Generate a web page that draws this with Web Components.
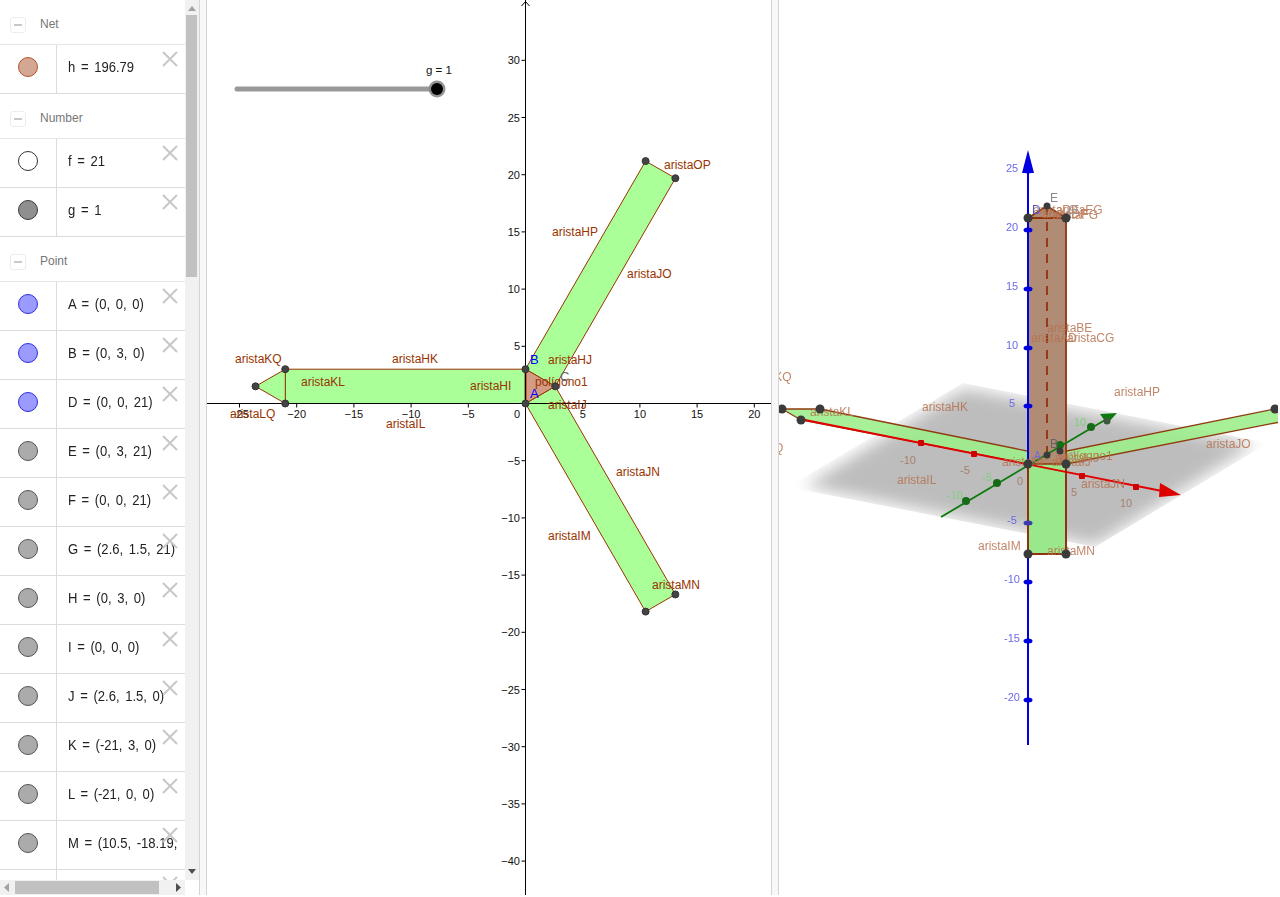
<!DOCTYPE html>
<html><head><meta charset="utf-8"><title>Net</title>
<style>html,body{margin:0;background:#fff;overflow:hidden}body{font-family:"Liberation Sans",sans-serif}</style>
</head><body>
<gg-app>
  <algebra-panel slot="algebra">
    <algebra-group label="Net"><algebra-row kind="net">h = 196.79</algebra-row></algebra-group>
    <algebra-group label="Number">
      <algebra-row kind="white">f = 21</algebra-row>
      <algebra-row kind="slider">g = 1</algebra-row>
    </algebra-group>
    <algebra-group label="Point">
      <algebra-row kind="free">A = (0, 0, 0)</algebra-row>
      <algebra-row kind="free">B = (0, 3, 0)</algebra-row>
      <algebra-row kind="free">D = (0, 0, 21)</algebra-row>
      <algebra-row kind="dep">E = (0, 3, 21)</algebra-row>
      <algebra-row kind="dep">F = (0, 0, 21)</algebra-row>
      <algebra-row kind="dep">G = (2.6, 1.5, 21)</algebra-row>
      <algebra-row kind="dep">H = (0, 3, 0)</algebra-row>
      <algebra-row kind="dep">I = (0, 0, 0)</algebra-row>
      <algebra-row kind="dep">J = (2.6, 1.5, 0)</algebra-row>
      <algebra-row kind="dep">K = (-21, 3, 0)</algebra-row>
      <algebra-row kind="dep">L = (-21, 0, 0)</algebra-row>
      <algebra-row kind="dep">M = (10.5, -18.19,</algebra-row>
      <algebra-row kind="dep"></algebra-row>
    </algebra-group>
  </algebra-panel>
  <view-splitter slot="s1"></view-splitter>
  <graphics-2d slot="g2"></graphics-2d>
  <view-splitter slot="s2"></view-splitter>
  <graphics-3d slot="g3"></graphics-3d>
</gg-app>
<script>
const sh=(el,html)=>{el.attachShadow({mode:'open'}).innerHTML=html;};
const T=(x,y,s,a='')=>`<text x="${x}" y="${y}" ${a}>${s}</text>`;

customElements.define('gg-app',class extends HTMLElement{constructor(){super();sh(this,`<style>
:host{display:flex;height:895px;width:1278px}
</style><slot name="algebra"></slot><slot name="s1"></slot><slot name="g2"></slot><slot name="s2"></slot><slot name="g3"></slot>`);}});

customElements.define('view-splitter',class extends HTMLElement{constructor(){super();sh(this,`<style>
:host{display:block;width:8px;box-sizing:border-box;height:895px;background:#f8f8f8;border-left:1px solid #d4d4d4;border-right:1px solid #d4d4d4}
</style>`);}});

customElements.define('algebra-panel',class extends HTMLElement{constructor(){super();sh(this,`<style>
:host{display:grid;grid-template:880px 15px/185px 14px;width:199px;height:895px;overflow:hidden}
.list{overflow:hidden;min-width:0;background:#fff}
.v{background:#f1f1f1;position:relative}
.v .thumb{position:absolute;left:1px;right:2px;top:15px;height:262px;background:#c1c1c1}
.h{background:#f1f1f1;position:relative}
.h .thumb{position:absolute;top:1px;left:15px;width:144px;background:#c1c1c1;height:13px}
svg{display:block;position:absolute}
</style>
<div class="list"><slot></slot></div>
<div class="v"><svg style="left:3px;top:5px" width="8" height="6"><path d="M4 1 8 6H0z" fill="#a3a3a3"/></svg><div class="thumb"></div><svg style="left:3px;top:869px" width="8" height="6"><path d="M0 0H8L4 5z" fill="#505050"/></svg></div>
<div class="h"><svg style="left:4px;top:3px" width="6" height="9"><path d="M0 4.5 5 0V9z" fill="#a3a3a3"/></svg><div class="thumb"></div><svg style="left:175px;top:3px" width="6" height="9"><path d="M1 0 6 4.5 1 9z" fill="#505050"/></svg></div>
<div></div>`);}});

customElements.define('algebra-group',class extends HTMLElement{constructor(){super();sh(this,`<style>
:host{display:block}
.head{height:38px;padding-top:6px;border-bottom:1px solid #e6e6e6;display:flex;align-items:center;gap:14px;padding-left:10px}
.box{width:14px;height:14px;border:1px solid #ececec;border-radius:3px;display:flex;align-items:center;justify-content:center}
.box i{display:block;width:8px;height:2px;background:#c8c8c8}
.label{font:12px "Liberation Sans",sans-serif;color:#777;margin-top:-3px}
</style><div class="head"><span class="box"><i></i></span><span class="label"></span></div><slot></slot>`);
this.shadowRoot.querySelector('.label').textContent=this.getAttribute('label');}});

const marbles={net:['#d4a793','#b0552d'],white:['#fff','#333'],slider:['#8f8f8f','#3a3a3a'],free:['#9a9aff','#2f2fe0'],dep:['#ababab','#555']};
customElements.define('algebra-row',class extends HTMLElement{constructor(){super();
const [f,s]=marbles[this.getAttribute('kind')];
sh(this,`<style>
:host{display:flex;height:48px;border-bottom:1px solid #dcdcdc;position:relative}
.m{width:56px;flex:none;border-right:1px solid #dcdcdc;display:flex;align-items:center;justify-content:center;padding-bottom:4px;height:44px}
.m i{display:block;width:18px;height:18px;border-radius:50%;background:${f};border:1px solid ${s}}
.v{flex:1;min-width:0;overflow:hidden;white-space:nowrap;padding-left:11px;padding-bottom:6px;height:42px;display:flex;align-items:center;font:15px "Liberation Sans",sans-serif;color:#222;word-spacing:2.3px}
.v span{display:inline-block;flex:none;transform:scaleX(.87);transform-origin:left center}
svg{position:absolute;right:7px;top:6px}
</style><div class="m"><i></i></div><div class="v"><span><slot></slot></span></div>
<svg width="16" height="16"><path d="M1 1 15 15M15 1 1 15" stroke="#c8c8c8" stroke-width="2" fill="none"/></svg>`);}});

customElements.define('graphics-2d',class extends HTMLElement{constructor(){super();
const X=u=>525.5+u*11.44,Y=v=>403.5-v*11.44;
const pts={A:[0,0],B:[0,3],C:[2.6,1.5],K:[-21,3],L:[-21,0],Q:[-23.6,1.5],M:[10.5,-18.19],N:[13.1,-16.69],O:[13.1,19.69],P:[10.5,21.19]};
const P=n=>`${X(pts[n][0]).toFixed(1)},${Y(pts[n][1]).toFixed(1)}`;
const poly=(ns,f)=>`<polygon points="${ns.map(P).join(' ')}" fill="${f}" stroke="#993300" stroke-width="1"/>`;
let ax='';
for(const u of [-25,-20,-15,-10,-5,5,10,15,20]){ax+=`<path d="M${X(u)} 403.500v4"/>`;}
for(let v=-40;v<=30;v+=5){if(v)ax+=`<path d="M525.5 ${Y(v)}h-4"/>`;}
let tx='';
for(const u of [-25,-20,-15,-10,-5,5,10,15,20]){tx+=T(X(u),418,(u<0?'−':'')+Math.abs(u),'text-anchor="middle"');}
tx+=T(517,418,'0','text-anchor="middle"');
for(let v=-40;v<=30;v+=5){if(v)tx+=T(520,Y(v)+4,(v<0?'−':'')+Math.abs(v),'text-anchor="end"');}
const labels=[['aristaOP',664,169],['aristaHP',552,236],['aristaJO',627,278],['aristaHK',392,363],['aristaKQ',235,363],['aristaKL',301,386],['aristaHI',470,390],['aristaHJ',548,364],['polígono1',535,386],['aristaIJ',548,409],['aristaLQ',230,418],['aristaIL',386,428],['aristaJN',616,476],['aristaIM',548,540],['aristaMN',652,589]];
sh(this,`<style>
:host{display:block;width:564px;height:895px;background:#fff}
svg{display:block;font-family:"Liberation Sans",sans-serif}
.t{font-size:11px;fill:#111}.l{font-size:12px;fill:#993300}
</style>
<svg width="564" height="895" viewBox="207 0 564 895">
${poly(['B','P','O','C'],'#aaff99')}${poly(['A','M','N','C'],'#aaff99')}${poly(['B','K','L','A'],'#aaff99')}${poly(['K','Q','L'],'#aaff99')}
${poly(['A','B','C'],'#d49c84')}
<path d="M${X(0)} ${Y(0)}V${Y(3)}" stroke="#993300" stroke-width="2"/>
<g stroke="#000" stroke-width="1" fill="none"><path d="M207 403.500H771M525.5 0V895M521.5 6 525.5 1.5 529.5 6"/>${ax}</g>
<g class="t">${tx}</g>
<g class="l">${labels.map(l=>T(l[1],l[2],l[0])).join('')}</g>
${T(530,364,'B','font-size="13" fill="#0000ff"')}${T(530,398,'A','font-size="13" fill="#0000ff"')}${T(560,381,'C','font-size="13" fill="#666"')}
${Object.keys(pts).map(n=>`<circle cx="${X(pts[n][0])}" cy="${Y(pts[n][1])}" r="3.5" fill="#444" stroke="#333"/>`).join('')}
<path d="M237 89H437" stroke="#999" stroke-width="5" stroke-linecap="round"/>
<circle cx="437" cy="89" r="8.5" fill="#8a8a8a" opacity=".9"/><circle cx="437" cy="89" r="6" fill="#000"/>
${T(426,74,'g = 1','font-size="11.5" fill="#111"')}
</svg>`);}});

customElements.define('graphics-3d',class extends HTMLElement{constructor(){super();
const lab=[['aristaHP',1114,396],['aristaJO',1206,448],['aristaHK',922,411],['aristaKL',810,416],['aristaKQ',745,381],['aristaLQ',738,452],['aristaIL',897,484],['aristaIM',978,550],['aristaMN',1047,555],['aristaJN',1081,488],['aristaBE',1047,332],['aristaAD',1031,342],['aristaCG',1067,342],['aristaEG',1056,214],['aristaFG',1052,219],['aristaDE',1033,214],['aristaDF',1042,218],['aristaHJ',1055,462],['aristaIJ',1052,466],['polígono1',1060,460],['aristaHI',1002,466]];
const zt=[[25,171],[20,230],[15,289],[10,348],[5,406],[-5,523],[-10,582],[-15,641],[-20,700]];
const xt=[[921,443],[974,454],[1082,476],[1136,487]];
const yt=[[966,501],[997,483],[1060,445],[1091,427]];
sh(this,`<style>
:host{display:block;width:499px;height:895px;background:#fff}
svg{display:block;font-family:"Liberation Sans",sans-serif}
.l{font-size:12px;fill:#b5714f;opacity:.85}
</style>
<svg width="499" height="895" viewBox="779 0 499 895">
<defs>
<filter id="soft" x="-10%" y="-15%" width="120%" height="130%"><feGaussianBlur stdDeviation="8"/></filter>
<filter id="aa" x="-2%" y="-2%" width="104%" height="104%"><feGaussianBlur stdDeviation=".35"/></filter>
<clipPath id="plane"><polygon points="788,487 963,383 1268,443 1095,547"/></clipPath>
</defs>
<g clip-path="url(#plane)"><polygon points="805,486 964,388 1255,444 1095,545" fill="#bdbdbd" filter="url(#soft)"/></g>
<g filter="url(#aa)">
<g font-size="11">
${zt.map(([v,y])=>T(1012,y+1,(v<0?'-':'')+Math.abs(v),'fill="#6a6ae8" text-anchor="middle"')).join('')}
${T(908,464,'-10','fill="#a5806d" text-anchor="middle"')}${T(965,474,'-5','fill="#a5806d" text-anchor="middle"')}${T(1020,485,'0','fill="#a5806d" text-anchor="middle"')}${T(1074,496,'5','fill="#a5806d" text-anchor="middle"')}${T(1126,507,'10','fill="#a5806d" text-anchor="middle"')}
${T(955,499,'-10','fill="#7fd07f" text-anchor="middle"')}${T(987,481,'-5','fill="#7fd07f" text-anchor="middle"')}${T(1080,426,'10','fill="#7fd07f" text-anchor="middle"')}
</g>
<polygon points="782,409 820,409 1047,455 1028,464 801,420" fill="#9dee8c" fill-opacity=".9"/>
<polygon points="1047,455 1275,409 1290,406.500 1290,420 1066,464" fill="#9dee8c" fill-opacity=".9"/>
<path d="M782 409H820L1047 455M782 409 801 420 1028 464M1047 455 1275 409 1290 406.500M1066 464 1290 420" fill="none" stroke="#8f3a10" stroke-width="1.300"/>
<rect x="1028" y="464" width="38" height="90" fill="#9ae88c"/>
<path d="M1028 464V554H1066V464" fill="none" stroke="#8f3308" stroke-width="2"/>
<polygon points="1028,218 1047,206 1066,218 1066,464 1047,455 1028,464" fill="#b08c76"/>
<polygon points="1028,464 1047,455 1066,464" fill="#b08a6a"/>
<path d="M1028 218H1066L1047 206ZM1066 218V464" fill="none" stroke="#8f3308" stroke-width="1.800"/>
<path d="M1047 206V455" stroke="#8f3308" stroke-width="1.800" stroke-dasharray="9 7" fill="none"/>
<path d="M1028 464H1066" stroke="#8f3308" stroke-width="1.500"/>
<path d="M800 419 1162 491" stroke="#e00000" stroke-width="1.800"/>
<polygon points="1160,483 1181,495 1159,497" fill="#dc0000"/>
${xt.map(([x,y])=>`<rect x="${x-3}" y="${y-3}" width="6" height="6" rx="1" fill="#d00000"/>`).join('')}
<path d="M941 517 1105 420" stroke="#0f7a0f" stroke-width="1.800"/>
<polygon points="1100,414 1117,413 1107,424" fill="#0f7a0f"/>
${yt.map(([x,y])=>`<circle cx="${x}" cy="${y}" r="4" fill="#146c14"/>`).join('')}
<circle cx="1107" cy="421" r="3.500" fill="#3a5a3a"/>
<path d="M1028 170V745" stroke="#0000e6" stroke-width="2"/>
<path d="M1028 464V554" stroke="#8f3308" stroke-width="2"/>
<polygon points="1028,150 1034,173 1022,173" fill="#0000e0"/>
${zt.map(([v,y])=>`<ellipse cx="1028" cy="${y}" rx="4.500" ry="2.500" fill="${v===-5?'#3a3ab0':'#0000e0'}"/>`).join('')}
<g class="l">${lab.map(l=>T(l[1],l[2],l[0])).join('')}</g>
${T(1032,214,'D','font-size="12" fill="#5555cc"')}${T(1050,202,'E','font-size="12" fill="#888"')}${T(1068,214,'G','font-size="12" fill="#999"')}
${T(1034,459,'A','font-size="10" fill="#6a6ae0"')}${T(1050,448,'B','font-size="12" fill="#666"')}${T(1068,460,'C','font-size="10" fill="#aaa"')}
${[[1028,218],[1047,206],[1066,218],[1028,464],[1066,464],[1028,554],[1066,554],[782,409],[820,409],[801,420],[1275,409],[1047,455],[1060,451]].map(([x,y],i)=>`<circle cx="${x}" cy="${y}" r="${(i===1||i>10)?3.500:4.500}" fill="#3a3a3a"/>`).join('')}
</g>
</svg>`);}});
</script>
</body></html>
